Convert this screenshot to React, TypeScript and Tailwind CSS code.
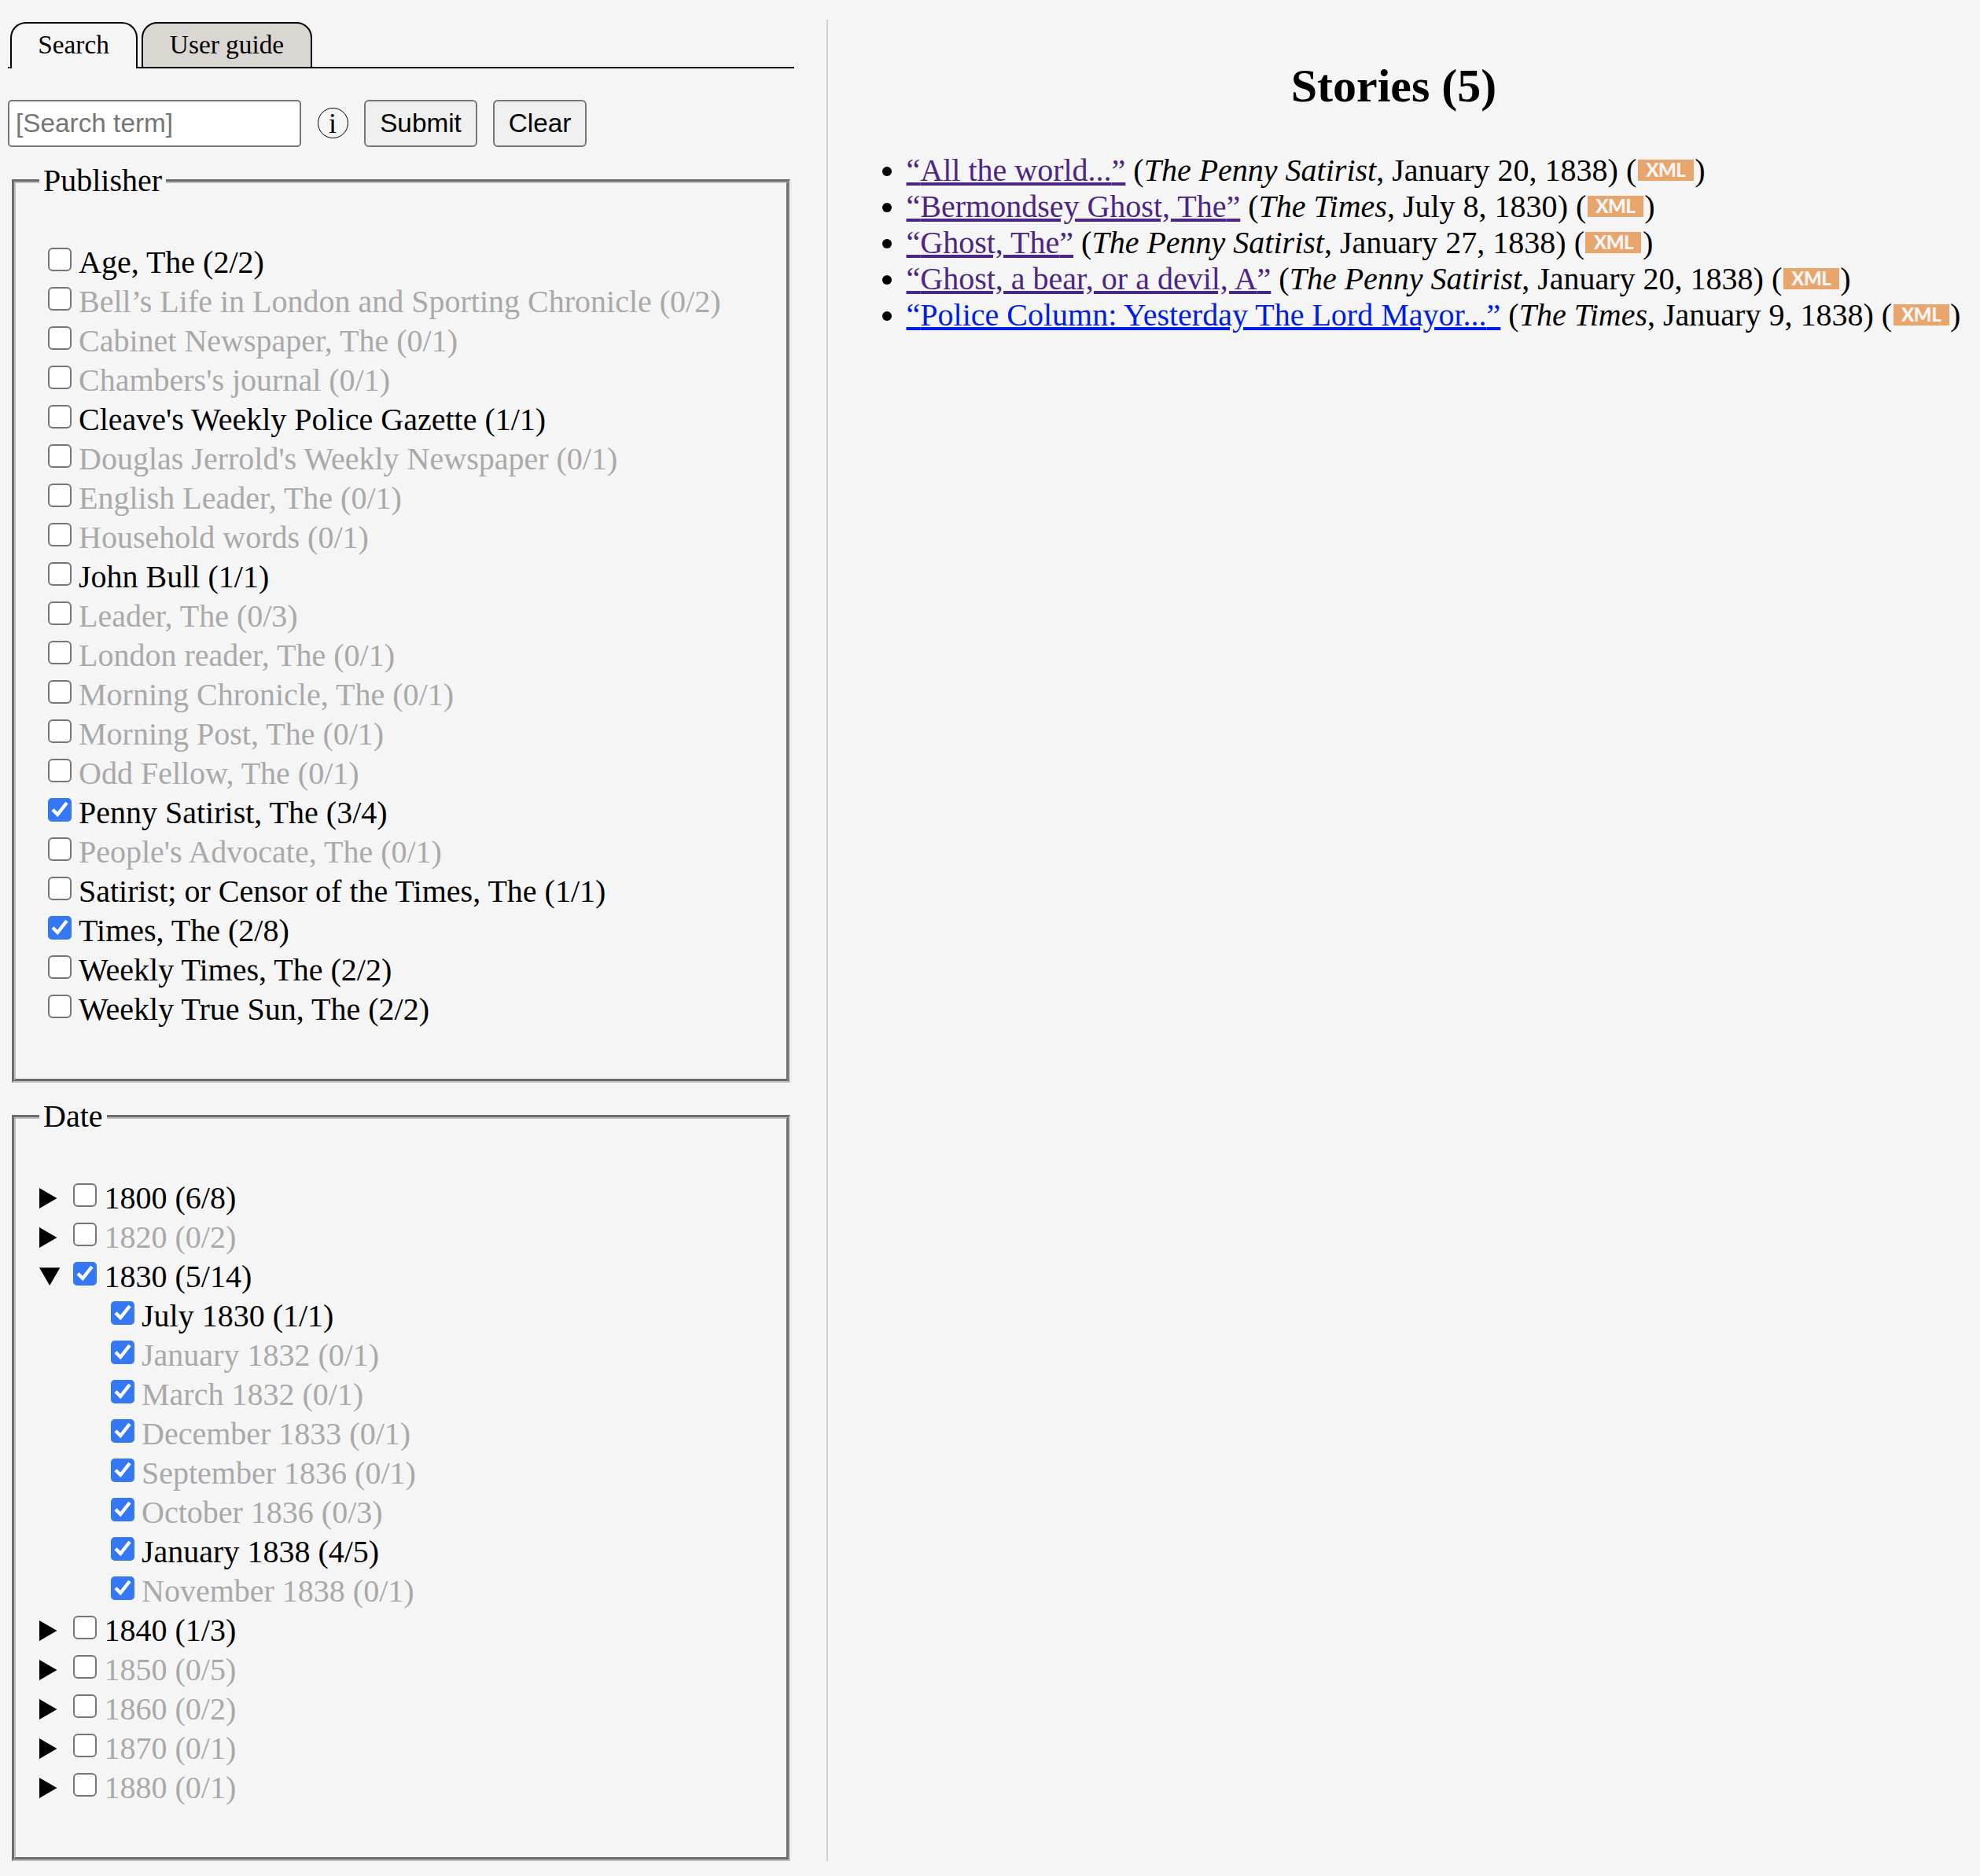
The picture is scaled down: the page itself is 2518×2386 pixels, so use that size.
import React from "react";

type Item = [label: string, checked?: boolean];

const publishers: Item[] = [
  ["Age, The (2/2)"],
  ["Bell’s Life in London and Sporting Chronicle (0/2)"],
  ["Cabinet Newspaper, The (0/1)"],
  ["Chambers's journal (0/1)"],
  ["Cleave's Weekly Police Gazette (1/1)"],
  ["Douglas Jerrold's Weekly Newspaper (0/1)"],
  ["English Leader, The (0/1)"],
  ["Household words (0/1)"],
  ["John Bull (1/1)"],
  ["Leader, The (0/3)"],
  ["London reader, The (0/1)"],
  ["Morning Chronicle, The (0/1)"],
  ["Morning Post, The (0/1)"],
  ["Odd Fellow, The (0/1)"],
  ["Penny Satirist, The (3/4)", true],
  ["People's Advocate, The (0/1)"],
  ["Satirist; or Censor of the Times, The (1/1)"],
  ["Times, The (2/8)", true],
  ["Weekly Times, The (2/2)"],
  ["Weekly True Sun, The (2/2)"],
];

const decades: { label: string; months?: string[] }[] = [
  { label: "1800 (6/8)" },
  { label: "1820 (0/2)" },
  {
    label: "1830 (5/14)",
    months: [
      "July 1830 (1/1)",
      "January 1832 (0/1)",
      "March 1832 (0/1)",
      "December 1833 (0/1)",
      "September 1836 (0/1)",
      "October 1836 (0/3)",
      "January 1838 (4/5)",
      "November 1838 (0/1)",
    ],
  },
  { label: "1840 (1/3)" },
  { label: "1850 (0/5)" },
  { label: "1860 (0/2)" },
  { label: "1870 (0/1)" },
  { label: "1880 (0/1)" },
];

const stories = [
  { title: "All the world...", paper: "The Penny Satirist", date: "January 20, 1838", visited: true },
  { title: "Bermondsey Ghost, The", paper: "The Times", date: "July 8, 1830", visited: true },
  { title: "Ghost, The", paper: "The Penny Satirist", date: "January 27, 1838", visited: true },
  { title: "Ghost, a bear, or a devil, A", paper: "The Penny Satirist", date: "January 20, 1838", visited: true },
  { title: "Police Column: Yesterday The Lord Mayor...", paper: "The Times", date: "January 9, 1838", visited: false },
];

function Checkbox({ checked }: { checked?: boolean }) {
  return checked ? (
    <span role="checkbox" aria-checked="true" className="mt-[6px] block size-[30px] shrink-0 rounded-[5px] bg-[#3478f6]">
      <svg viewBox="0 0 30 30" className="block size-[30px]" fill="none" stroke="white" strokeWidth="4.4">
        <path d="M6 14.8 L12.2 21 L24 6" />
      </svg>
    </span>
  ) : (
    <span
      role="checkbox"
      aria-checked="false"
      className="mt-[6px] block size-[30px] shrink-0 rounded-[6px] border-2 border-[#767676] bg-white"
    />
  );
}

function Label({ text }: { text: string }) {
  return <span className={text.includes("(0/") ? "text-[#a9a9a9]" : "text-black"}>{text}</span>;
}

function Panel({ legend, children }: { legend: string; children: React.ReactNode }) {
  return (
    <fieldset className="mx-[5px] mb-[20px] border-[5px] border-[#c0c0c0] px-[30px] pt-[56px] pb-[63px] [border-style:groove]">
      <legend className="px-[5px] leading-[46px]">{legend}</legend>
      {children}
    </fieldset>
  );
}

export default function App() {
  return (
    <div className="flex h-[2386px] w-[2518px] bg-[#f5f5f5] px-[10px] pt-[25px] pb-[19px] font-['Liberation_Serif',serif] text-[40px] text-black">
      <div className="w-[1000px] shrink-0 pt-[3px]">
        <div className="flex h-[59px] text-[33.33px] leading-[57px]">
          <div className="w-[3px] rounded-br-[2px] border-b-2 border-black" />
          <div className="w-[162px] rounded-t-[20px] border-2 border-b-0 border-black pr-px text-center leading-[54px]">Search</div>
          <div className="w-[5px] border-b-2 border-black" />
          <div className="w-[217px] rounded-t-[20px] border-2 border-black bg-[#dad7d2] text-center leading-[54px]">User guide</div>
          <div className="flex-1 border-b-2 border-black" />
        </div>
        <div className="mt-[40px] flex h-[60px] font-['Liberation_Sans',sans-serif] text-[33.33px]">
          <input
            placeholder="[Search term]"
            className="w-[373px] rounded-[5px] border-2 border-[#767676] bg-white px-[8px] placeholder:text-[#757575]"
          />
          <span className="mt-[10px] ml-[20.5px] flex size-[39px] items-center justify-center rounded-full border-[1.5px] border-black font-['Liberation_Serif',serif] text-[36px] leading-[36px]">
            i
          </span>
          <button className="ml-[20.5px] w-[144px] rounded-[6px] border-2 border-[#767676] bg-[#efefef]">Submit</button>
          <button className="ml-[20px] w-[119px] rounded-[6px] border-2 border-[#767676] bg-[#efefef]">Clear</button>
        </div>
        <div className="mt-[20px]">
          <Panel legend="Publisher">
            <ul>
              {publishers.map(([label, checked]) => (
                <li key={label} className="flex h-[50px] gap-[9px] pl-[11px] leading-[50px] whitespace-nowrap">
                  <Checkbox checked={checked} />
                  <Label text={label} />
                </li>
              ))}
            </ul>
          </Panel>
          <Panel legend="Date">
            <ul>
              {decades.map(({ label, months }) => (
                <li key={label} className="leading-[50px] whitespace-nowrap">
                  <div className="flex h-[50px]">
                    <svg viewBox="0 0 43 50" className="h-[50px] w-[43px] shrink-0">
                      <path d={months ? "M0 13.3H26.3L13.2 36Z" : "M0 12L22.5 25L0 38Z"} />
                    </svg>
                    <Checkbox checked={!!months} />
                    <span className="pl-[9.5px]">
                      <Label text={label} />
                    </span>
                  </div>
                  {months?.map((m) => (
                    <div key={m} className="flex h-[50px] gap-[9px] pl-[91px]">
                      <Checkbox checked />
                      <Label text={m} />
                    </div>
                  ))}
                </li>
              ))}
            </ul>
          </Panel>
        </div>
      </div>
      <div className="ml-[41px] h-[2342px] w-[2px] shrink-0 bg-[#d0d0d0]" />
      <div className="flex-1 pt-[50px]">
        <h2 className="mr-[16px] text-center text-[60px] leading-[69px] font-bold">Stories (5)</h2>
        <ul className="mt-[50px] ml-[69px]">
          {stories.map((s) => (
            <li key={s.title} className="flex h-[46px] leading-[46px] whitespace-pre">
              <span className="mt-[18px] mr-[18.5px] block size-[12px] rounded-full bg-black" />
              <a
                className={
                  s.visited
                    ? "text-[#4c2684] underline decoration-[4px] underline-offset-[2px]"
                    : "text-[#001ee3] underline decoration-[4px] underline-offset-[2px]"
                }
              >
                “{s.title}”
              </a>
              <span> (</span>
              <i>{s.paper}</i>
              <span>, {s.date}) (</span>
              <span className="mt-[9px] mr-[1.5px] ml-[1.5px] block h-[27px] w-[71px] bg-[#e9a66c] text-center font-['Lato',sans-serif] text-[24px] leading-[25px] font-black tracking-[-0.5px] text-[#f5f5f5]">
                XML
              </span>
              <span>)</span>
            </li>
          ))}
        </ul>
      </div>
    </div>
  );
}
